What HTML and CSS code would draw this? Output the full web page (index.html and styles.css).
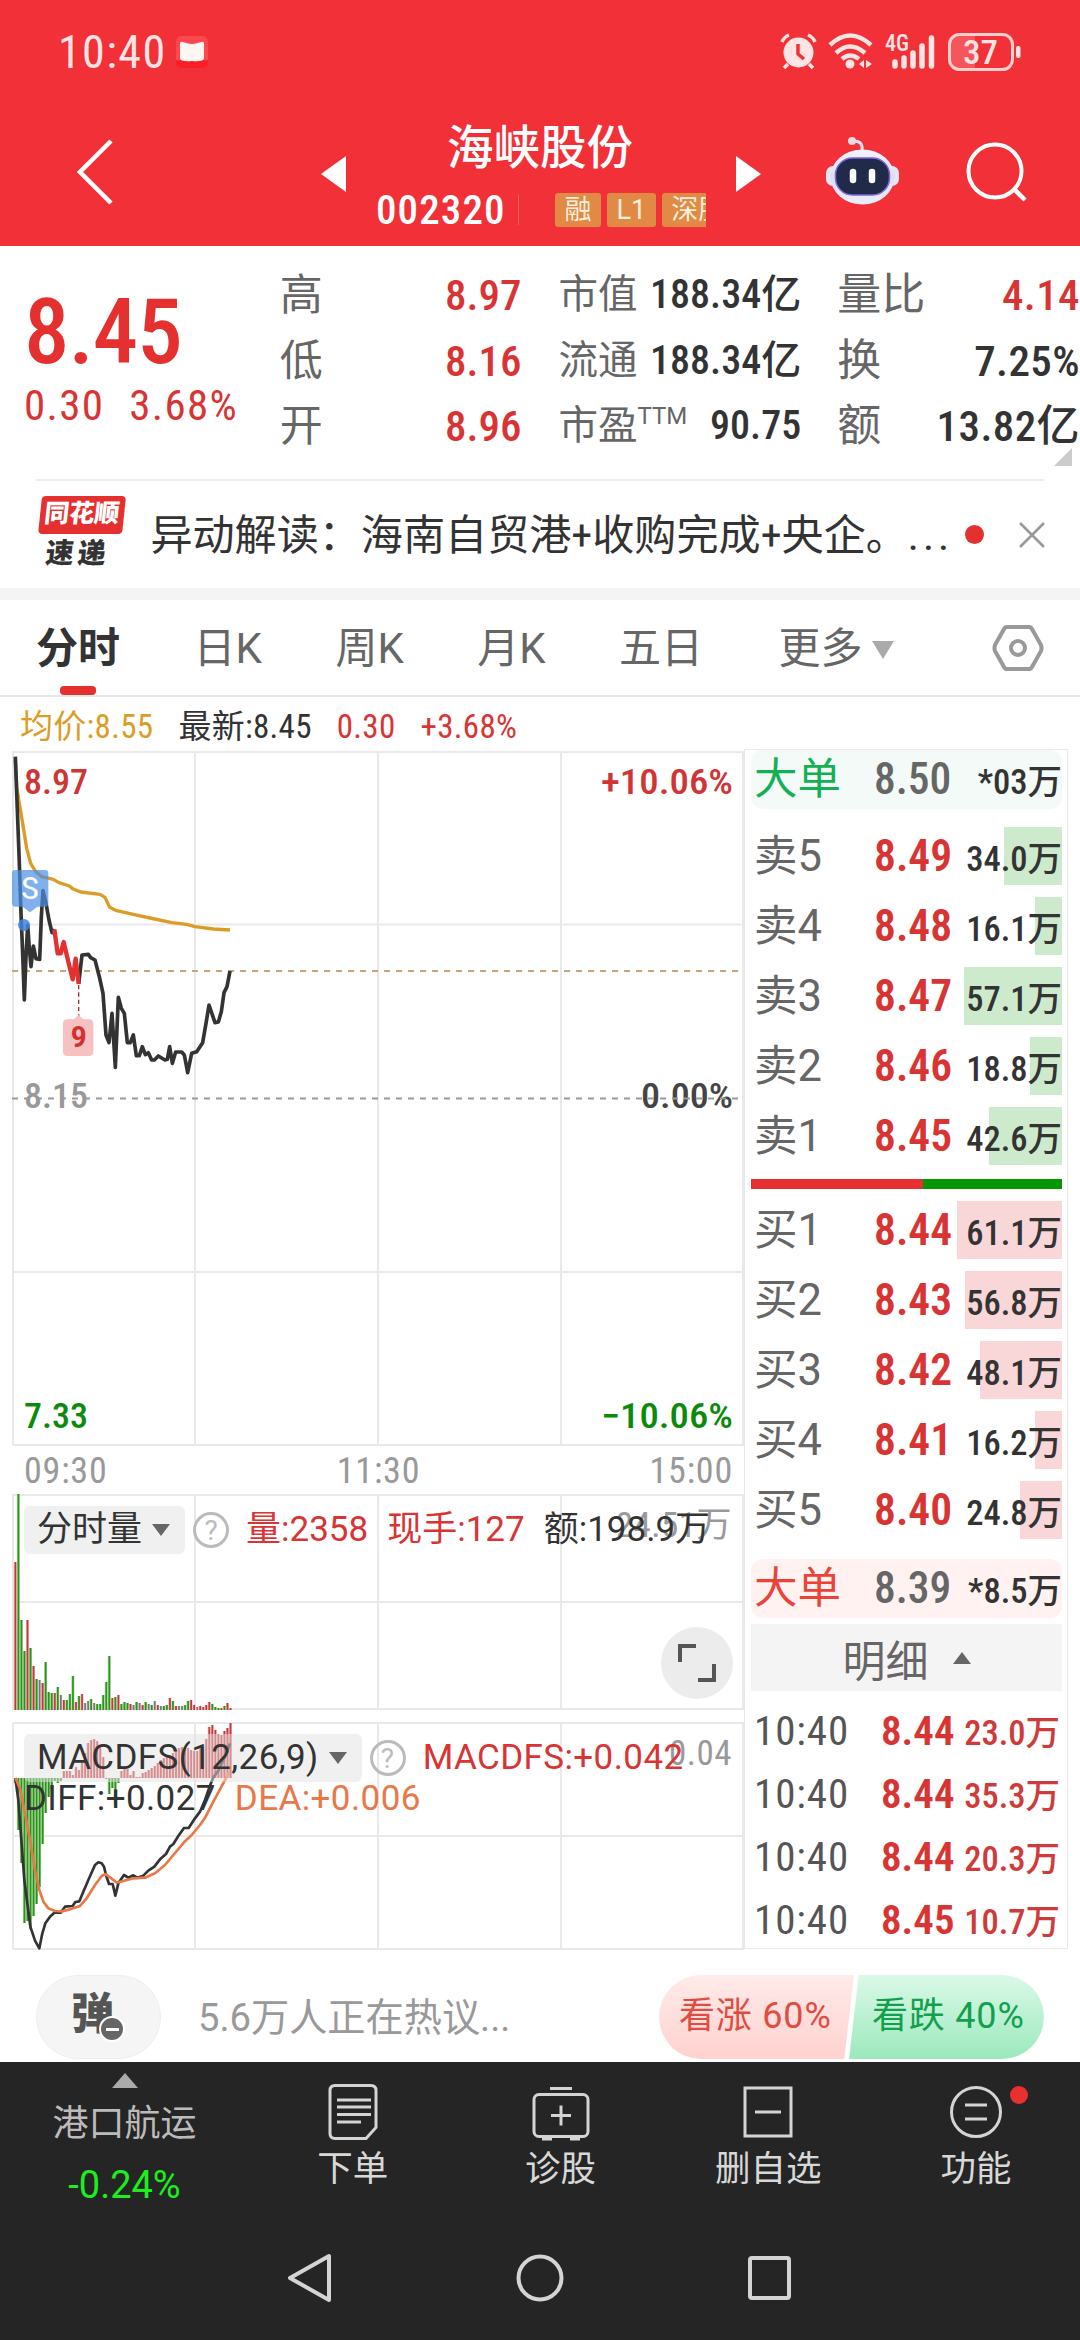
FILE: index.html
```html
<!DOCTYPE html>
<html lang="zh-CN">
<head>
    <meta charset="UTF-8">
    <meta name="viewport" content="width=device-width, initial-scale=1.0">
    <title>海峡股份 002320</title>
    <link rel="stylesheet" href="styles.css">
</head>
<body>

<header>
    <div class="status-bar">
        <span class="clock">10:40</span>
        <svg class="book" width="32" height="32" viewBox="0 0 32 32"><rect width="32" height="32" rx="6" fill="#ff484d"/><path d="M0 24h32v3q0 5-6 5H6q-6 0-6-5z" fill="#fb1f28"/><path d="M4 8q0-3 3-2l3 1q6 2 12 0l3-1q3-1 3 2v14q0 4-12 3-12 1-12-3z" fill="#fff6f4"/></svg>
        <div class="status-icons">
            <svg width="37" height="37" viewBox="0 0 37 37"><circle cx="18.500" cy="19.500" r="15" fill="#ffe4e4"/><path d="M18 11v10l6 5" fill="none" stroke="#f23038" stroke-width="3.500"/><path d="M2 9q2-5 7-7M35 9q-2-5-7-7M8 31l-4 4M29 31l4 4" stroke="#ffe4e4" stroke-width="3.500" fill="none"/></svg>
            <svg width="46" height="37" viewBox="0 0 46 37"><g fill="none" stroke="#ffe4e4" stroke-width="4.500"><path d="M2 12q20-19 41 0"/><path d="M8 20q14-13 29 0"/><path d="M14 26q8-7 17 0"/></g><circle cx="22" cy="31" r="4.500" fill="#ffe4e4"/><path d="M36 27v8l-5-4zM38 27v8l6-4z" fill="#ffe4e4"/></svg>
            <svg width="52" height="37" viewBox="0 0 52 37"><text x="0" y="18" font-size="24" font-weight="500" textLength="24" lengthAdjust="spacingAndGlyphs" class="svg-white">4G</text><path d="M10 29v4M19 25v8M28 20v13M37 13v20M46.500 5v28" stroke="#ffe4e4" stroke-width="5.500" stroke-linecap="round"/></svg>
            <svg width="74" height="38" viewBox="0 0 74 38"><path d="M2 11q0-9 9-9h16v34H11q-9 0-9-9z" fill="#f5565c"/><rect x="1.500" y="1.500" width="63" height="35" rx="10" fill="none" stroke="#ffcfd0" stroke-width="3"/><rect x="68" y="13" width="4.500" height="12" rx="2" fill="#ffe4e4"/><text x="15" y="30.500" font-size="33" font-weight="500" textLength="35" lengthAdjust="spacingAndGlyphs" class="svg-white">37</text></svg>
        </div>
    </div>
    <div class="navbar">
        <svg class="back" width="40" height="68" viewBox="0 0 40 68"><path d="M35 3L4 34l31 31" fill="none" stroke="#fff" stroke-width="4.500"/></svg>
        <svg class="prev" width="25" height="36" viewBox="0 0 25 36"><path d="M25 0v36L0 18z" fill="#fff"/></svg>
        <div class="stock">
            <h1>海峡股份</h1>
            <div class="stock-sub">
                <span class="code">002320</span>
                <i class="split"></i>
                <div class="tags"><b>融</b><b>L1</b><b>深股通</b></div>
            </div>
        </div>
        <svg class="next" width="25" height="36" viewBox="0 0 25 36"><path d="M0 0v36l25-18z" fill="#fff"/></svg>
        <svg class="robot" width="76" height="70" viewBox="0 0 76 70">
            <defs><linearGradient id="head" x2="0" y2="1"><stop offset="0" stop-color="#f5f4ff"/><stop offset=".5" stop-color="#dddcf6"/><stop offset="1" stop-color="#efeefc"/></linearGradient></defs>
            <path d="M37 14q1-9-8-9" fill="none" stroke="#f0e0f0" stroke-width="3"/><circle cx="27" cy="5" r="4" fill="#f6d8e2"/>
            <rect x="1" y="30" width="73" height="20" rx="7" fill="#e6e5f8"/>
            <ellipse cx="37.500" cy="41" rx="32" ry="27.500" fill="url(#head)"/>
            <rect x="10.500" y="22" width="54" height="37" rx="17" fill="#222a4a" stroke="#7a66d8" stroke-width="1.500"/>
            <path d="M28 36v8M47 36v8" stroke="#fff" stroke-width="6.500" stroke-linecap="round"/>
        </svg>
        <svg class="search" width="64" height="64" viewBox="0 0 64 64"><circle cx="29" cy="29" r="26.500" fill="none" stroke="#fff" stroke-width="4"/><path d="M48 47l11 11" stroke="#fff" stroke-width="4.500"/></svg>
    </div>
</header>

<section class="quote">
    <div class="quote-main">
        <div class="price">8.45</div>
        <div class="change"><span>0.30</span><span>3.68%</span></div>
    </div>
    <div class="quote-col col-a">
        <div><label>高</label><em class="red">8.97</em></div>
        <div><label>低</label><em class="red">8.16</em></div>
        <div><label>开</label><em class="red">8.96</em></div>
    </div>
    <div class="quote-col col-b">
        <div><label>市值</label><em>188.34亿</em></div>
        <div><label>流通</label><em>188.34亿</em></div>
        <div><label>市盈<sup>TTM</sup></label><em>90.75</em></div>
    </div>
    <div class="quote-col col-c">
        <div><label>量比</label><em class="red">4.14</em></div>
        <div><label>换</label><em>7.25%</em></div>
        <div><label>额</label><em>13.82亿</em></div>
    </div>
    <i class="corner"></i>
</section>

<section class="news">
    <div class="news-logo"><b>同花顺</b><span>速递</span></div>
    <p>异动解读：<span>海南自贸港+收购完成+央企。<span class="dots">...</span></span></p>
    <i class="dot"></i>
    <svg width="26" height="26" viewBox="0 0 26 26"><path d="M1 1l24 24M25 1L1 25" stroke="#999" stroke-width="2.600"/></svg>
</section>

<nav class="tabs">
    <a class="active">分时</a><a>日K</a><a>周K</a><a>月K</a><a>五日</a><a class="more">更多<i></i></a>
    <svg width="50" height="46" viewBox="0 0 50 46"><path d="M14 2h22q2 0 3 2l9 16q1 3 0 6l-9 16q-1 2-3 2H14q-2 0-3-2L2 26q-1-3 0-6l9-16q1-2 3-2z" fill="none" stroke="#999" stroke-width="4"/><circle cx="25" cy="23" r="7" fill="none" stroke="#999" stroke-width="4"/></svg>
</nav>

<div class="legend"><span class="avg">均价:8.55</span><span>最新:8.45</span><span class="red">0.30</span><span class="red">+3.68%</span></div>

<main>
    <div class="charts">
        <svg class="price-chart" width="732" height="696" viewBox="0 0 732 696">
            <path class="grid" d="M1 2H731V695H1zM183 2V695M366 2V695M549 2V695M1 174.500H731M1 522H731"/>
            <g class="labels">
                <text x="12" y="44" fill="#d03535" textLength="64" lengthAdjust="spacingAndGlyphs">8.97</text>
                <text x="589" y="44" fill="#d03535" textLength="132" lengthAdjust="spacingAndGlyphs">+10.06%</text>
                <text x="12" y="358" fill="#999" textLength="64" lengthAdjust="spacingAndGlyphs">8.15</text>
                <text x="629" y="358" fill="#444" textLength="92" lengthAdjust="spacingAndGlyphs">0.00%</text>
                <text x="12" y="678" fill="#0c8a0c" textLength="64" lengthAdjust="spacingAndGlyphs">7.33</text>
                <text x="589" y="678" fill="#0c8a0c" textLength="132" lengthAdjust="spacingAndGlyphs">−10.06%</text>
            </g>
            <path d="M0 221H731" stroke="#c2a878" stroke-width="2" stroke-dasharray="6 6"/>
            <path d="M0 348.500H731" stroke="#999" stroke-width="2" stroke-dasharray="6 6"/>
            <g transform="translate(-12 -10) scale(.33333)" fill="none" stroke-width="10" stroke-linejoin="round">
                <polyline stroke="#dc9c28" points="46,60 50,140 58,190 68,250 80,325 92,370 105,392 125,410 160,418 175,427 208,438 218,446 242,456 300,463 315,472 329,502 350,512 400,523 450,534 515,548 560,553 585,560 640,567 690,570"/>
                <polyline stroke="#333" stroke-width="11" points="46,50 52,210 58,370 63,520 68,640 73,780 78,650 83,555 88,625 93,680 100,618 108,656 119,658 124,530 129,452 138,490 147,540 156,578 163,568"/>
                <polyline stroke="#333" stroke-width="11" points="236,732 246,645 265,643 272,653 285,660 298,710 309,760 318,885 327,908 336,820 346,982 355,772 364,805 373,820 382,908 391,908 400,885 409,947 418,947 427,920 436,944 445,938 455,960 463,960 475,948 495,960 502,958 509,920 517,970 527,936 545,936 553,945 563,998 575,940 590,935 608,908 618,850 627,795 645,848 655,846 664,815 672,758 681,740 690,693"/>
                <polyline stroke="#e53030" stroke-width="13" points="163,568 173,640 182,640 191,606 205,665 218,718 227,656 236,732"/>
                <path d="M236 735V828" stroke="#a03030" stroke-width="4" stroke-dasharray="13 9"/>
                <path d="M202 838H222L236 825 250 838H267Q280 838 280 851V935Q280 948 267 948H202Q189 948 189 935V851Q189 838 202 838z" fill="#f7c0c1"/>
                <path d="M46 390H136Q145 390 145 400V490Q145 500 136 500H112L90 517 68 500H46Q36 500 36 490V400Q36 390 46 390z" fill="#4a90e6" fill-opacity=".7"/>
                <circle cx="72" cy="555" r="18" fill="#4285e0" fill-opacity=".85"/>
            </g>
            <text x="9" y="149" font-size="31" textLength="18" lengthAdjust="spacingAndGlyphs" fill="#fff">S</text>
            <text x="58.500" y="297" font-size="29" font-weight="600" textLength="16.500" lengthAdjust="spacingAndGlyphs" fill="#d52f2f">9</text>
        </svg>
        <div class="times"><span>09:30</span><span>11:30</span><span>15:00</span></div>

        <div class="sub-chart volume">
            <svg id="volume" width="732" height="216" viewBox="0 0 732 216">
                <path class="grid" d="M1 1H731V215H1zM183 1V215M366 1V215M549 1V215M1 108H731"/>
            </svg>
            <div class="indicator">
                <span class="picker">分时量<i></i></span><span class="help">?</span>
                <span class="red">量:2358</span><span class="red">现手:127</span><span>额:198.9万</span>
            </div>
            <span class="max">24.51万</span>
            <div class="expand"><svg width="40" height="40" viewBox="0 0 40 40"><path d="M3 19V3h16M37 21v16H21" fill="none" stroke="#555" stroke-width="4"/></svg></div>
        </div>

        <div class="sub-chart macd">
            <svg id="macd" width="732" height="228" viewBox="0 0 732 228">
                <path class="grid" d="M1 1H731V227H1zM183 1V227M366 1V227M549 1V227M1 114H731"/>
                <g id="macdBars"></g>
                <g transform="translate(-12 -22) scale(.33333)" fill="none" stroke-width="8" stroke-linejoin="round">
                    <polyline stroke="#333" points="46,234 55,300 64,420 73,540 82,610 91,680 105,722 118,745 127,700 136,670 150,650 163,638 182,638 195,620 218,618 226,606 238,604 250,575 265,540 285,495 295,487 305,490 312,500 318,525 327,552 338,552 346,587 355,550 372,525 385,533 400,526 412,533 430,527 445,512 463,500 480,478 498,462 510,440 520,432 535,408 552,384 566,384 585,355 600,335 615,300 628,262 640,232 655,212 668,185 680,160 690,130"/>
                    <polyline stroke="#e87848" points="46,234 60,265 75,340 90,420 105,510 118,570 130,605 145,625 165,633 185,634 210,628 240,618 260,595 285,555 305,528 316,522 330,532 350,548 370,543 400,535 435,533 465,520 495,495 520,465 552,427 575,405 600,375 617,350 640,305 660,268 675,240 688,215"/>
                </g>
            </svg>
            <div class="indicator">
                <span class="picker">MACDFS(12,26,9)<i></i></span><span class="help">?</span>
                <span class="red">MACDFS:+0.042</span>
            </div>
            <div class="diff"><span>DIFF:+0.027</span><span class="orange">DEA:+0.006</span></div>
            <span class="max">0.04</span>
        </div>
    </div>

    <aside class="book-panel">
        <div class="big big-sell"><label>大单</label><em>8.50</em><span>*03万</span></div>
        <div class="orders sell">
            <div class="order"><i style="width:58px"></i><label>卖5</label><em>8.49</em><span>34.0万</span></div>
            <div class="order"><i style="width:27px"></i><label>卖4</label><em>8.48</em><span>16.1万</span></div>
            <div class="order"><i style="width:98px"></i><label>卖3</label><em>8.47</em><span>57.1万</span></div>
            <div class="order"><i style="width:32px"></i><label>卖2</label><em>8.46</em><span>18.8万</span></div>
            <div class="order"><i style="width:73px"></i><label>卖1</label><em>8.45</em><span>42.6万</span></div>
        </div>
        <div class="ratio"><i style="width:172px"></i></div>
        <div class="orders buy">
            <div class="order"><i style="width:105px"></i><label>买1</label><em>8.44</em><span>61.1万</span></div>
            <div class="order"><i style="width:97px"></i><label>买2</label><em>8.43</em><span>56.8万</span></div>
            <div class="order"><i style="width:82px"></i><label>买3</label><em>8.42</em><span>48.1万</span></div>
            <div class="order"><i style="width:27px"></i><label>买4</label><em>8.41</em><span>16.2万</span></div>
            <div class="order"><i style="width:42px"></i><label>买5</label><em>8.40</em><span>24.8万</span></div>
        </div>
        <div class="big big-buy"><label>大单</label><em>8.39</em><span>*8.5万</span></div>
        <div class="detail-title">明细<i></i></div>
        <div class="ticks">
            <div><label>10:40</label><em>8.44</em><span>23.0万</span></div>
            <div><label>10:40</label><em>8.44</em><span>35.3万</span></div>
            <div><label>10:40</label><em>8.44</em><span>20.3万</span></div>
            <div><label>10:40</label><em>8.45</em><span>10.7万</span></div>
        </div>
    </aside>
</main>

<section class="discuss">
    <div class="danmu"><b>弹</b><i></i></div>
    <p>5.6万人正在热议...</p>
    <div class="votes">
        <span class="vote-up">看涨 60%</span>
        <span class="vote-down">看跌 40%</span>
    </div>
</section>

<footer>
    <div class="actions">
        <div class="sector"><i></i><span>港口航运</span><em>-0.24%</em></div>
        <div class="action">
            <svg width="58" height="58" viewBox="0 0 58 58"><path d="M11 2.500h36q5 0 5 5v37L42 55.500H11q-5 0-5-5v-43q0-5 5-5z"/><path d="M13 17h34M13 24h34M13 31.500h34M13 39h24"/></svg>
            <span>下单</span>
        </div>
        <div class="action">
            <svg width="58" height="58" viewBox="0 0 58 58"><rect x="2" y="11.500" width="54" height="42" rx="5"/><path d="M18 5.500h22M19 32.500h20M29 22.500v20M10 56h10M38 56h10"/></svg>
            <span>诊股</span>
        </div>
        <div class="action">
            <svg width="58" height="58" viewBox="0 0 58 58"><rect x="6" y="5" width="46" height="48"/><path d="M16 29h26"/></svg>
            <span>删自选</span>
        </div>
        <div class="action">
            <svg width="58" height="58" viewBox="0 0 58 58"><circle cx="29" cy="29" r="24.500"/><path d="M18 22h22M18 36h22"/></svg>
            <span>功能</span>
            <i class="badge"></i>
        </div>
    </div>
    <div class="system-nav">
        <svg width="50" height="50" viewBox="0 0 50 50"><path d="M43 3v44L4 25z"/></svg>
        <svg width="50" height="50" viewBox="0 0 50 50"><circle cx="25" cy="25" r="21.500"/></svg>
        <svg width="50" height="50" viewBox="0 0 50 50"><rect x="6" y="5" width="39" height="40" rx="2"/></svg>
    </div>
</footer>

<script>
    const NS = 'http://www.w3.org/2000/svg';
    const colors = { r: '#c0393d', g: '#2f8f22', k: '#777' };
    const lights = { r: '#f5b5b5', g: '#a5dc95', k: '#ddd' };

    function addBar(parent, x, y, height, color, light) {
        [[x - 1.5, 3, light], [x - 0.75, 1.7, color]].forEach(([left, width, fill]) => {
            const rect = document.createElementNS(NS, 'rect');
            rect.setAttribute('x', left);
            rect.setAttribute('y', y);
            rect.setAttribute('width', width);
            rect.setAttribute('height', height);
            rect.setAttribute('fill', fill);
            parent.appendChild(rect);
        });
    }

    // one entry per minute: height and direction
    const volume = '148r 216g 90g 59g 90r 62g 44r 31g 30k 27r 48g 18g 17g 17r 23g 15k 10r 10g 16g 34g 8r 14g 16r 7k 9k 11g 7k 6g 6g 15g 28g 54g 12r 13g 15r 6g 8g 7g 6r 5k 8g 7k 5r 8g 6k 5g 9k 5r 4k 4g 5g 12r 9g 4r 4k 4k 5g 9g 10r 5r 3k 4r 3r 5r 8r 6g 3g 2g 2r 4g 7r 2r'.split(' ');
    volume.forEach((item, i) => {
        const height = parseInt(item);
        const dir = item.slice(-1);
        addBar(document.getElementById('volume'), 3.3 + i * 3.03, 216 - height, height, colors[dir], lights[dir]);
    });

    const macd = [-5, -52, -85, -145, -143, -151, -138, -126, -109, -66, -35, -19, -12, -3, -5, -3, 7, 7, 7, 3, 11, 8, 15, 25, 35, 38, 39, 37, 32, 21, -1, -16, -10, -27, -5, 7, 11, 9, 3, 7, 1, 1, 5, 6, 8, 10, 12, 15, 18, 20, 21, 23, 25, 28, 30, 31, 31, 30, 28, 27, 27, 29, 31, 39, 51, 53, 48, 44, 43, 47, 50, 55];
    macd.forEach((value, i) => {
        const dir = value > 0 ? 'r' : 'g';
        addBar(document.getElementById('macdBars'), 3.3 + i * 3.03, value > 0 ? 56 - value : 56, Math.abs(value), colors[dir], lights[dir]);
    });
</script>

</body>
</html>
```
FILE: styles.css
```css
* {
    box-sizing: border-box;
}

body {
    margin: 0;
    width: 1080px;
    height: 2340px;
    overflow: hidden;
    background-color: #fff;
    color: #333;
    font-family: Roboto, 'Noto Sans CJK SC', sans-serif;
    font-stretch: 87%;
}

em, i {
    font-style: normal;
}

p, h1 {
    margin: 0;
}

svg {
    display: block;
    flex: none;
    overflow: visible;
}

.red {
    color: #d93434;
}

.orange {
    color: #e87848;
}

header {
    height: 246px;
    background-color: #f23038;
    color: #fff;
}

.status-bar {
    display: flex;
    align-items: center;
    height: 104px;
    padding: 0 58px;
}

.clock {
    width: 118px;
    font-size: 46px;
    letter-spacing: 1.4px;
    color: #ffe4e4;
}

.status-icons {
    display: flex;
    gap: 11px;
    margin-left: auto;
}

.svg-white {
    fill: #ffe4e4;
}

.navbar {
    display: flex;
    height: 142px;
    padding-left: 76px;
}

.back {
    margin-top: 34px;
}

.prev {
    margin: 52px 0 0 205px;
}

.stock {
    width: 390px;
    padding: 16px 0 0 30px;
}

.stock h1 {
    padding-left: 71px;
    font-size: 46.5px;
    line-height: 56px;
    font-weight: 500;
}

.stock-sub {
    display: flex;
    align-items: center;
    height: 34px;
    margin-top: 17px;
}

.code {
    width: 142px;
    font-size: 41px;
    font-weight: 500;
    letter-spacing: 1.1px;
}

.split {
    width: 1px;
    height: 30px;
    background-color: #f4605c;
}

.tags {
    display: flex;
    gap: 6px;
    width: 151px;
    margin-left: 36px;
    overflow: hidden;
}

.tags b {
    flex: none;
    height: 34px;
    padding: 0 9.5px;
    border-radius: 3px;
    background-color: #e08a45;
    color: #ffefdd;
    font-size: 27px;
    line-height: 34px;
    font-weight: 400;
    font-stretch: 100%;
}

.next {
    margin-top: 52px;
}

.robot {
    margin: 32px 0 0 64px;
}

.search {
    margin: 38px 0 0 65px;
}

.quote {
    position: relative;
    display: flex;
    height: 235px;
    padding-top: 18px;
    font-weight: 500;
}

.quote::after {
    content: '';
    position: absolute;
    left: 36px;
    right: 36px;
    bottom: 0;
    height: 2px;
    background-color: #eee;
}

.quote-main {
    width: 280px;
    padding: 18px 0 0 24px;
    color: #e53030;
}

.price {
    font-size: 91px;
    line-height: 100px;
    letter-spacing: -1px;
}

.change {
    display: flex;
    gap: 25px;
    font-size: 43px;
    line-height: 46px;
    font-weight: 400;
    letter-spacing: 1.3px;
    color: #d93434;
}

.quote-col div {
    display: flex;
    justify-content: space-between;
    height: 65.5px;
    line-height: 62px;
    font-size: 43px;
}

.quote-col label {
    color: #666;
    font-weight: 400;
}

.col-a {
    width: 242px;
}

.col-b {
    width: 243px;
    margin-left: 37px;
}

.col-b label {
    font-size: 39.5px;
}

.col-b em {
    font-size: 40px;
}

.col-b sup {
    font-size: 24px;
    font-stretch: 100%;
    line-height: 0;
    vertical-align: 15px;
}

.col-c {
    width: 243px;
    margin-left: 36px;
}

.col-c label {
    font-size: 44px;
}

.col-c em {
    letter-spacing: 0.4px;
}

.corner {
    position: absolute;
    right: 8px;
    bottom: 15px;
    border-left: 18px solid transparent;
    border-bottom: 18px solid #ccc;
}

.news {
    display: flex;
    align-items: center;
    height: 107px;
    padding: 0 35px 0 36px;
}

.news-logo {
    display: flex;
    flex-direction: column;
    align-items: center;
    width: 88px;
    font-size: 28px;
    font-weight: 900;
    transform: skewX(-6deg);
}

.news-logo b {
    width: 84px;
    height: 38px;
    border-radius: 4px;
    background-color: #e53030;
    color: #fff;
    font-size: 25px;
    line-height: 36px;
    text-align: center;
}

.news-logo span {
    line-height: 39px;
    letter-spacing: 4px;
}

.news p {
    display: flex;
    width: 803px;
    margin: 0 0 7px 27px;
    font-size: 42.1px;
    white-space: nowrap;
}

.news .dots {
    letter-spacing: 4px;
}

.dot {
    width: 19px;
    height: 19px;
    margin: 0 35px 0 12px;
    border-radius: 50%;
    background-color: #e53030;
}

.tabs {
    display: flex;
    align-items: center;
    height: 109px;
    padding-left: 36px;
    border-top: 12px solid #f4f4f4;
    border-bottom: 2px solid #e8e8e8;
    color: #666;
    font-size: 42px;
    font-stretch: 100%;
}

.tabs a {
    position: relative;
    height: 95px;
    line-height: 97px;
    margin-right: 73.5px;
    white-space: nowrap;
}

.tabs .active {
    color: #333;
    font-weight: 700;
}

.tabs .active::after {
    content: '';
    position: absolute;
    left: 24px;
    bottom: 0;
    width: 36px;
    height: 9px;
    border-radius: 4px;
    background-color: #e53030;
}

.tabs .more {
    margin: 0 99px 0 2px;
}

.more i {
    display: inline-block;
    margin-left: 9px;
    vertical-align: 4px;
    border: 11px solid transparent;
    border-top: 18px solid #aaa;
    border-bottom: 0;
}

.legend {
    display: flex;
    gap: 25px;
    height: 52px;
    padding-left: 20px;
    font-size: 33px;
    letter-spacing: 0.3px;
    line-height: 59px;
}

.avg {
    color: #dc9c28;
}

main {
    display: flex;
    height: 1202px;
    padding: 0 12px;
}

.charts {
    width: 732px;
    padding-top: 1px;
}

.grid {
    fill: none;
    stroke: #e9e9e9;
    stroke-width: 2;
}

.labels {
    font-size: 35px;
    font-weight: 500;
}

.times {
    display: flex;
    justify-content: space-between;
    height: 48px;
    padding: 0 11px 0 12px;
    font-size: 36px;
    letter-spacing: 0.8px;
    line-height: 50px;
    color: #999;
}

.sub-chart {
    position: relative;
    font-size: 35px;
    font-stretch: 100%;
}

.indicator {
    position: absolute;
    left: 12px;
    top: 12px;
    display: flex;
    align-items: center;
    height: 48px;
    line-height: 46px;
    white-space: nowrap;
}

.picker {
    display: flex;
    align-items: center;
    height: 48px;
    margin-right: 8px;
    padding: 0 15px 0 13px;
    border-radius: 6px;
    background-color: rgba(225, 225, 225, 0.5);
}

.picker i {
    margin-left: 10px;
    border: 9px solid transparent;
    border-top: 12px solid #666;
    border-bottom: 0;
}

.help {
    width: 36px;
    height: 36px;
    margin-right: 17px;
    border: 3px solid #bbb;
    border-radius: 50%;
    color: #bbb;
    font-size: 28px;
    line-height: 31px;
    text-align: center;
}

.indicator .red {
    margin-right: 19px;
}

.max {
    position: absolute;
    right: 12px;
    top: 10px;
    font-stretch: 87%;
    letter-spacing: 0.5px;
    line-height: 44px;
    color: #999;
    z-index: -1;
}

.expand {
    position: absolute;
    right: 11px;
    bottom: 11px;
    width: 72px;
    height: 72px;
    padding: 16px;
    border-radius: 50%;
    background-color: #ececec;
}

.macd {
    margin-top: 12px;
}

.macd .indicator, .diff {
    letter-spacing: 0.4px;
}

.diff {
    position: absolute;
    left: 12px;
    top: 53px;
    display: flex;
    gap: 19px;
    line-height: 48px;
}

.book-panel {
    width: 324px;
    height: 1200px;
    padding: 0 5px 0 6px;
    border: 1px solid #e9e9e9;
}

.big, .order, .ticks div {
    position: relative;
    display: flex;
    align-items: baseline;
    justify-content: flex-end;
}

.book-panel label {
    position: relative;
    margin-right: auto;
    padding-left: 3px;
    color: #666;
    font-size: 43.5px;
    line-height: 60px;
    font-stretch: 100%;
}

.book-panel em {
    position: relative;
    width: 79px;
    color: #d93434;
    font-size: 43.5px;
    line-height: 1;
    font-weight: 600;
}

.book-panel span {
    position: relative;
    width: 109px;
    font-size: 34.5px;
    line-height: 1;
    font-weight: 500;
    text-align: right;
}

.book-panel .big {
    height: 59px;
    border-radius: 12px;
}

.book-panel .big em {
    color: #666;
    font-weight: 500;
}

.big-sell {
    background-color: #f3faf7;
}

.big-buy {
    margin-top: 20px;
    background-color: #fff2f1;
}

.book-panel .big-sell label {
    color: #14b055;
}

.book-panel .big-buy label {
    color: #e94437;
}

.orders {
    display: flex;
    flex-direction: column;
    gap: 12px;
}

.sell {
    margin-top: 18px;
}

.buy {
    margin-top: 12px;
}

.order {
    height: 58px;
}

.order i {
    position: absolute;
    right: 0;
    top: 0;
    height: 58px;
}

.sell i {
    background-color: #cdeacd;
}

.buy i {
    background-color: #f9d6d7;
}

.ratio {
    height: 10px;
    margin-top: 14px;
    background-color: #049904;
}

.ratio i {
    display: block;
    height: 10px;
    background-color: #e83030;
}

.detail-title {
    display: flex;
    align-items: center;
    justify-content: center;
    height: 67px;
    margin-top: 6px;
    background-color: #f4f4f4;
    color: #666;
    font-size: 43px;
}

.detail-title i {
    margin-left: 24px;
    border: 9px solid transparent;
    border-top: 0;
    border-bottom: 12px solid #666;
}

.ticks {
    padding-top: 10px;
}

.ticks div {
    height: 63px;
    padding-right: 2px;
}

.ticks label {
    font-size: 41px;
    font-stretch: 87%;
    letter-spacing: 0.9px;
    color: #555;
}

.ticks em {
    width: 73px;
    font-size: 41px;
}

.ticks span {
    width: 106px;
    color: #cf3a3a;
}

.discuss {
    display: flex;
    align-items: center;
    height: 111px;
    padding: 21px 36px 0;
}

.danmu {
    position: relative;
    width: 125px;
    height: 84px;
    border: 1px solid #eee;
    border-radius: 42px;
    background-color: #f5f5f5;
    color: #555;
    font-size: 43px;
    line-height: 76px;
    padding-left: 34px;
}

.danmu b {
    font-weight: 900;
}

.danmu i {
    position: absolute;
    left: 62px;
    top: 40px;
    width: 26px;
    height: 26px;
    border: 2px solid #fff;
    border-radius: 50%;
    background: linear-gradient(#fff, #fff) center / 13px 3px no-repeat #666;
}

.discuss p {
    margin: 0 0 6px 37px;
    font-size: 38.2px;
    font-stretch: 100%;
    color: #999;
}

.votes {
    display: flex;
    margin-left: auto;
}

.votes span {
    width: 195px;
    height: 84px;
    padding-left: 20px;
    font-size: 36px;
    font-stretch: 100%;
    letter-spacing: 0.8px;
    line-height: 82px;
    white-space: nowrap;
}

.vote-up {
    border-radius: 42px 0 0 42px;
    background: linear-gradient(#ffebea, #ffd2ce);
    clip-path: polygon(0 0, 100% 0, 95% 100%, 0 100%);
    color: #e24c40;
}

.votes .vote-down {
    margin-left: -5px;
    padding-left: 23px;
    border-radius: 0 42px 42px 0;
    background: linear-gradient(#dbf9e8, #9be9bd);
    clip-path: polygon(5% 0, 100% 0, 100% 100%, 0 100%);
    color: #12a04e;
}

footer {
    height: 279px;
    background-color: #252525;
    color: #d8d8d8;
}

.actions {
    display: flex;
    height: 172px;
}

.sector {
    display: flex;
    flex-direction: column;
    align-items: center;
    width: 249px;
    padding-top: 11px;
    color: #bbb;
    font-size: 36px;
}

.sector i {
    border: 13px solid transparent;
    border-top: 0;
    border-bottom: 15px solid #aaa;
}

.sector span {
    margin-top: 10px;
    line-height: 53px;
}

.sector em {
    margin-top: 10px;
    line-height: 49px;
    color: #1bf01b;
    font-size: 38px;
    font-stretch: 100%;
}

.action {
    position: relative;
    display: flex;
    flex-direction: column;
    align-items: center;
    width: 207.7px;
    padding-top: 21px;
    font-size: 35.5px;
}

.action span {
    margin-top: 3px;
    line-height: 51px;
}

.action svg, .system-nav svg {
    fill: none;
    stroke: #d4d4d4;
    stroke-width: 3;
}

.badge {
    position: absolute;
    right: 52px;
    top: 24px;
    width: 18px;
    height: 18px;
    border-radius: 50%;
    background-color: #e83030;
}

.system-nav {
    display: flex;
    justify-content: center;
    gap: 179px;
    padding-top: 19px;
}

.system-nav svg {
    stroke-width: 4;
    stroke-linejoin: round;
}
```
